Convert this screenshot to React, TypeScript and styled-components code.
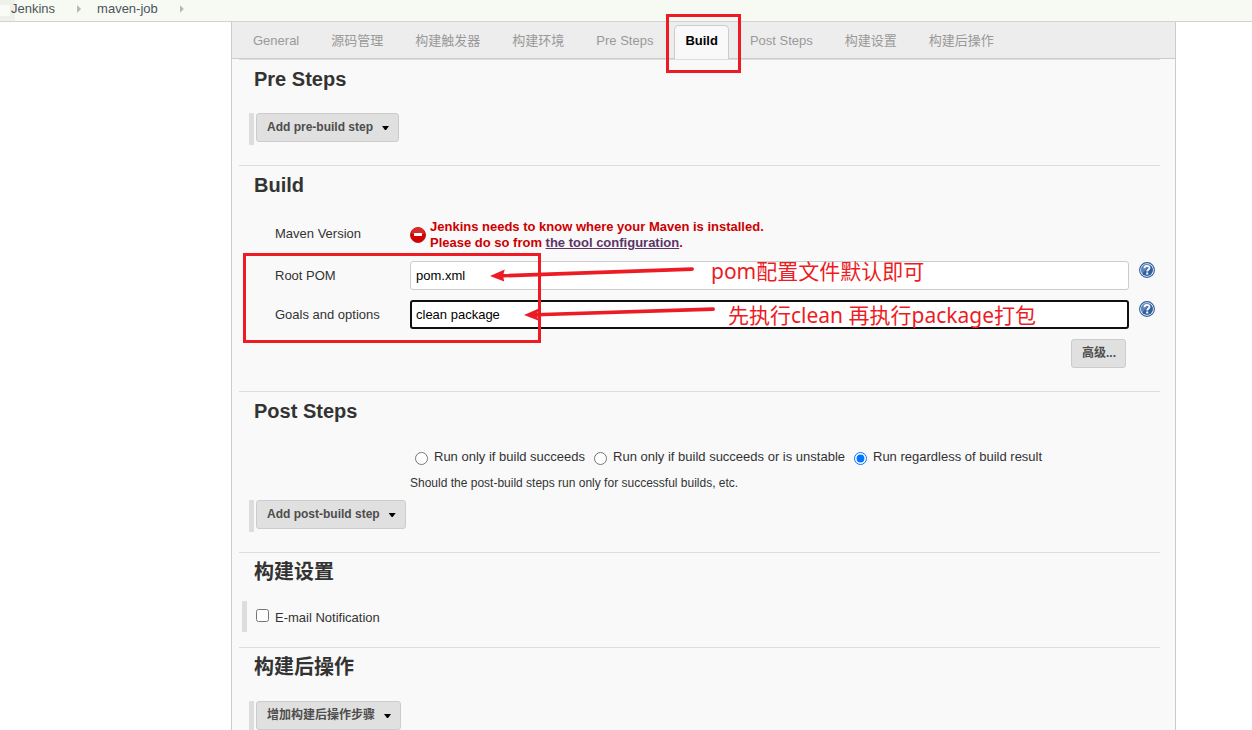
import React from 'react';
import styled, { createGlobalStyle, css } from 'styled-components';

const RED = '#ed1c24';

const GlobalStyle = createGlobalStyle`
  *, *::before, *::after { box-sizing: border-box; }
  body {
    margin: 0;
    background: #fff;
    color: #333;
    font: 13px/16px "Liberation Sans", "Noto Sans CJK SC", sans-serif;
  }
  button, input { font-family: inherit; }
`;

const Page = styled.div`
  min-height: 100vh;
  display: flex;
  flex-direction: column;
`;

const Breadcrumbs = styled.nav`
  position: relative;
  display: flex;
  align-items: center;
  gap: 16px;
  height: 22px;
  padding: 0 0 3px 11px;
  background: #f6faf2;
  border-bottom: 1px solid #d3d3d3;
`;

const LoadingChip = styled.span`
  position: absolute;
  left: 0;
  top: 0;
  width: 15px;
  height: 21px;
  background: #eef1e9;
  &::before {
    content: '';
    position: absolute;
    left: 0;
    top: 5px;
    width: 10px;
    height: 11px;
    background: #f9fbf6;
  }
`;

const Crumb = styled.a`
  position: relative;
  color: #4d545d;
  text-decoration: none;
`;

const CrumbArrow = styled.span`
  width: 4px;
  height: 8px;
  margin: 0 0 0 6px;
  background: #b5b8b2;
  clip-path: polygon(0 0, 100% 50%, 0 100%);
`;

const Panel = styled.main`
  flex: 1;
  margin: 0 76px 0 231px;
  background: #f9f9f9;
  border: solid #ccc;
  border-width: 0 1px;
`;

const TabBar = styled.div`
  display: flex;
  height: 37px;
  padding: 3px 0 0 5px;
  background: #ededed;
  border-bottom: 1px solid #ccc;
`;

const Tab = styled.button<{ $active?: boolean }>`
  position: relative;
  height: 34px;
  margin: 0 5px;
  padding: 0 10px 3px;
  border: 1px solid transparent;
  border-bottom: 0;
  border-radius: 5px 5px 0 0;
  background: none;
  color: #999;
  font-size: 13px;
  line-height: 16px;
  white-space: nowrap;
  ${p => p.$active && css`
    border-color: #ccc;
    background: #f9f9f9;
    color: #000;
    font-weight: bold;
  `}
`;

const Marker = styled.span`
  position: absolute;
  z-index: 2;
  border: 3px solid ${RED};
  pointer-events: none;
`;

const TabMarker = styled(Marker)`
  inset: -12px -13px -14px -9px;
`;

const FieldsMarker = styled(Marker)`
  inset: -8px auto -14px 4px;
  width: 298px;
`;

const Sections = styled.div`
  padding: 0 15px 0 7px;
`;

const Section = styled.section`
  border-top: 1px solid #ddd;
`;

const Heading = styled.h2`
  margin: 0 0 0 15px;
  font-size: 20px;
  line-height: 38px;
`;

const StepRow = styled.div<{ $last?: boolean }>`
  display: flex;
  align-items: flex-start;
  gap: 2px;
  padding: 15px 0 ${p => (p.$last ? 0 : 20)}px 10px;
`;

const Handle = styled.span<{ $height: number }>`
  width: 5px;
  height: ${p => p.$height}px;
  background: #ddd;
`;

const Button = styled.button`
  display: flex;
  align-items: center;
  gap: 9px;
  height: 29px;
  padding: 0 9px 2px 10px;
  border: 1px solid #ccc;
  border-radius: 3px;
  background: #e0e0e0;
  color: #4d4d4d;
  font-size: 12px;
  line-height: 16px;
  font-weight: bold;
`;

const Caret = styled.span`
  width: 7px;
  height: 4px;
  margin-top: 3px;
  background: #000;
  clip-path: polygon(0 0, 100% 0, 58% 100%, 42% 100%);
`;

const Form = styled.div`
  display: flex;
  flex-direction: column;
  gap: 10px;
  padding: 15px 5px 23px 0;
`;

const Fields = styled.div`
  position: relative;
  display: flex;
  flex-direction: column;
  gap: 10px;
`;

const Row = styled.div`
  display: grid;
  grid-template-columns: 135px 1fr 16px;
  align-items: center;
  padding-left: 36px;
`;

const RowText = styled.span`
  padding-bottom: 2px;
`;

const ErrorNote = styled.div`
  display: flex;
  align-items: center;
  gap: 4px;
  color: #c00;
  font-weight: bold;
`;

const NoteLink = styled.a`
  color: #5c3566;
`;

const InputWrap = styled.div`
  position: relative;
  margin-right: 10px;
`;

const TextInput = styled.input<{ $focused?: boolean }>`
  display: block;
  width: 100%;
  height: 29px;
  padding: 0 ${p => (p.$focused ? 4 : 5)}px;
  border: ${p => (p.$focused ? '2px solid #101010' : '1px solid #ccc')};
  border-radius: 3px;
  background: #fff;
  color: #000;
  font-size: 13px;
  outline: none;
`;

const ArrowSvg = styled.svg`
  position: absolute;
  left: 0;
  top: 0;
  z-index: 3;
  overflow: visible;
  pointer-events: none;
`;

const Callout = styled.span<{ $left: number; $top: number }>`
  position: absolute;
  left: ${p => p.$left}px;
  top: ${p => p.$top}px;
  z-index: 3;
  color: ${RED};
  font: 21px/28px "Noto Sans", "Noto Sans CJK SC", sans-serif;
  white-space: nowrap;
  pointer-events: none;
`;

const HelpButton = styled.button`
  align-self: start;
  width: 16px;
  height: 16px;
  margin-top: 1px;
  padding: 0;
  border: 0;
  background: none;
`;

const Advanced = styled.div`
  display: flex;
  justify-content: flex-end;
  padding-right: 29px;
`;

const RunMode = styled.div`
  padding: 15px 0 0 171px;
`;

const Radios = styled.div`
  display: flex;
  gap: 9px;
  padding-left: 5px;
  line-height: 24px;
  white-space: nowrap;
`;

const Choice = styled.label`
  display: flex;
  align-items: center;
  gap: 6px;
`;

const Radio = styled.input`
  width: 13px;
  height: 13px;
  margin: 2px 0 0;
`;

const Hint = styled.p`
  margin: 4px 0 -8px;
  font-size: 12px;
  line-height: 20px;
`;

const CheckRow = styled.div`
  display: flex;
  align-items: flex-start;
  gap: 9px;
  padding: 10px 0 15px 3px;
`;

const Checkbox = styled.input`
  width: 13px;
  height: 13px;
  margin: 0;
`;

const CheckChoice = styled(Choice)`
  align-items: flex-start;
  padding-top: 8px;
  line-height: 18px;
`;

function ErrorIcon() {
  return (
    <svg width="16" height="16" viewBox="0 0 16 16" aria-hidden="true">
      <circle cx="8" cy="8" r="7.5" fill="#d40000" stroke="#b02020" />
      <path d="M1.5 7a6.5 6.5 0 0 1 13 0z" fill="#e85050" opacity=".5" />
      <rect x="4" y="6" width="8" height="3" rx=".5" fill="#fff" />
    </svg>
  );
}

function HelpIcon() {
  return (
    <svg width="16" height="16" viewBox="0 0 16 16" aria-hidden="true" display="block">
      <circle cx="8" cy="8" r="7.4" fill="#fff" stroke="#2f5b9c" strokeWidth="1.1" />
      <circle cx="8" cy="8" r="6" fill="#2f5f9f" />
      <path d="M3.4 11.5A5.6 5.6 0 0 1 11 3.2z" fill="#7f9fca" opacity=".6" />
      <path d="M5.5 6.2C5.5 3.2 10.6 3.2 10.5 6C10.4 7.6 8.2 7.6 8.2 9.6" fill="none" stroke="#fff" strokeWidth="1.9" />
      <rect x="7.2" y="10.5" width="2" height="2" fill="#fff" />
    </svg>
  );
}

function Arrow({ tip, tail }: { tip: [number, number]; tail: [number, number] }) {
  const dx = tail[0] - tip[0];
  const dy = tail[1] - tip[1];
  const length = Math.hypot(dx, dy);
  const angle = (Math.atan2(dy, dx) * 180) / Math.PI;
  return (
    <ArrowSvg width="1" height="1" aria-hidden="true">
      <g transform={`translate(${tip[0]} ${tip[1]}) rotate(${angle})`} fill={RED}>
        <path d="M0 0L15 -6L13 0L14 6Z" />
        <path d={`M12 -1.6L${length - 2} -1.9Q${length} -1.9 ${length} 0Q${length} 1.9 ${length - 2} 1.9L12 2Z`} />
      </g>
    </ArrowSvg>
  );
}

function StepMenu({ label, last }: { label: string; last?: boolean }) {
  return (
    <StepRow $last={last}>
      <Handle $height={last ? 29 : 32} />
      <Button type="button">
        {label}
        <Caret />
      </Button>
    </StepRow>
  );
}

const tabs = ['General', '源码管理', '构建触发器', '构建环境', 'Pre Steps', 'Build', 'Post Steps', '构建设置', '构建后操作'];
const runModes = ['Run only if build succeeds', 'Run only if build succeeds or is unstable', 'Run regardless of build result'];

export default function App() {
  return (
    <Page>
      <GlobalStyle />
      <Breadcrumbs>
        <LoadingChip />
        <Crumb href="#jenkins">Jenkins</Crumb>
        <CrumbArrow />
        <Crumb href="#maven-job">maven-job</Crumb>
        <CrumbArrow />
      </Breadcrumbs>
      <Panel>
        <TabBar>
          {tabs.map(name => (
            <Tab key={name} type="button" $active={name === 'Build'}>
              {name}
              {name === 'Build' && <TabMarker />}
            </Tab>
          ))}
        </TabBar>
        <Sections>
          <Section>
            <Heading>Pre Steps</Heading>
            <StepMenu label="Add pre-build step" />
          </Section>
          <Section>
            <Heading>Build</Heading>
            <Form>
              <Row>
                <RowText>Maven Version</RowText>
                <ErrorNote>
                  <ErrorIcon />
                  <div>
                    Jenkins needs to know where your Maven is installed.
                    <br />
                    Please do so from <NoteLink href="#tools">the tool configuration</NoteLink>.
                  </div>
                </ErrorNote>
              </Row>
              <Fields>
                <FieldsMarker />
                <Row>
                  <label htmlFor="pom">Root POM</label>
                  <InputWrap>
                    <TextInput id="pom" type="text" defaultValue="pom.xml" />
                    <Arrow tip={[80, 15]} tail={[284, 8]} />
                    <Callout $left={301} $top={-4}>pom配置文件默认即可</Callout>
                  </InputWrap>
                  <HelpButton type="button" aria-label="Help for Root POM"><HelpIcon /></HelpButton>
                </Row>
                <Row>
                  <label htmlFor="goals">Goals and options</label>
                  <InputWrap>
                    <TextInput id="goals" type="text" defaultValue="clean package" $focused />
                    <Arrow tip={[114, 15]} tail={[305, 9]} />
                    <Callout $left={318} $top={1}>先执行clean 再执行package打包</Callout>
                  </InputWrap>
                  <HelpButton type="button" aria-label="Help for Goals and options"><HelpIcon /></HelpButton>
                </Row>
              </Fields>
              <Advanced>
                <Button type="button">高级...</Button>
              </Advanced>
            </Form>
          </Section>
          <Section>
            <Heading>Post Steps</Heading>
            <RunMode>
              <Radios>
                {runModes.map((mode, i) => (
                  <Choice key={mode}>
                    <Radio type="radio" name="run-mode" defaultChecked={i === 2} />
                    {mode}
                  </Choice>
                ))}
              </Radios>
              <Hint>Should the post-build steps run only for successful builds, etc.</Hint>
            </RunMode>
            <StepMenu label="Add post-build step" />
          </Section>
          <Section>
            <Heading>构建设置</Heading>
            <CheckRow>
              <Handle $height={31} />
              <CheckChoice>
                <Checkbox type="checkbox" />
                E-mail Notification
              </CheckChoice>
            </CheckRow>
          </Section>
          <Section>
            <Heading>构建后操作</Heading>
            <StepMenu label="增加构建后操作步骤" last />
          </Section>
        </Sections>
      </Panel>
    </Page>
  );
}
